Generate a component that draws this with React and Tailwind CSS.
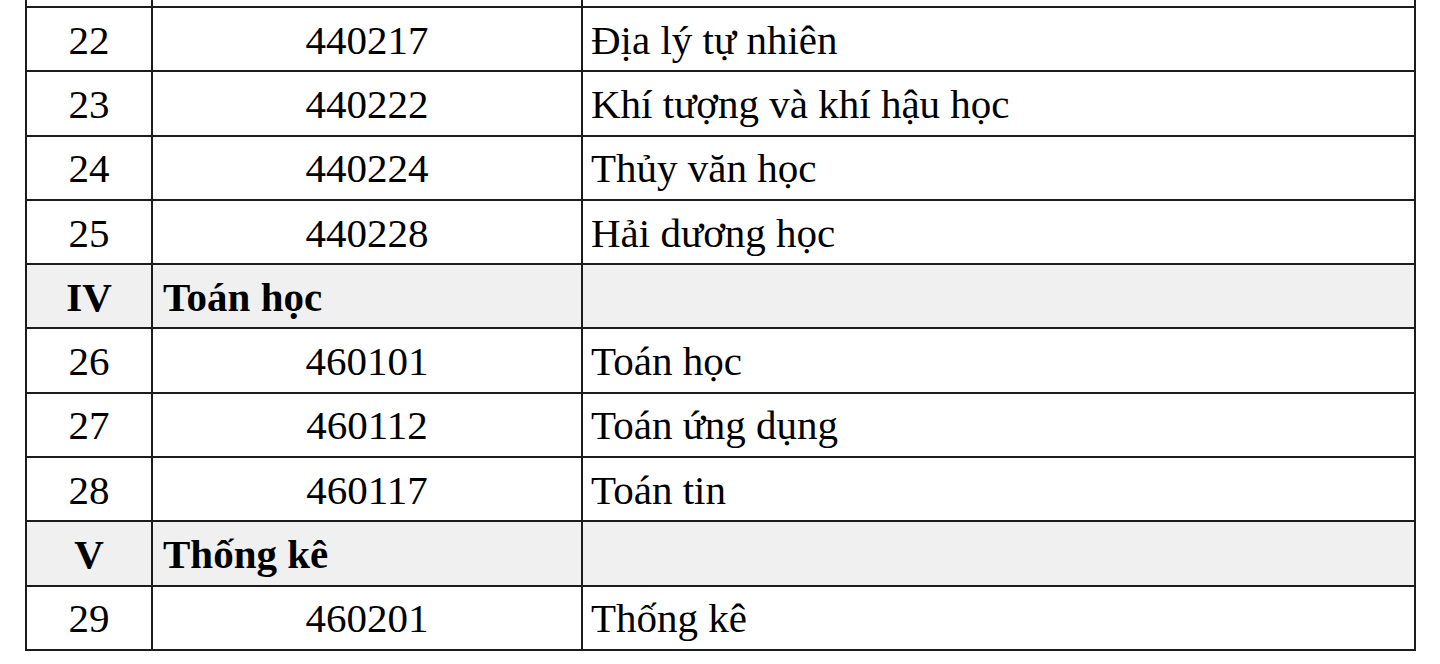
import React from 'react';

const rows = [
  { no: '22', code: '440217', name: 'Địa lý tự nhiên' },
  { no: '23', code: '440222', name: 'Khí tượng và khí hậu học' },
  { no: '24', code: '440224', name: 'Thủy văn học' },
  { no: '25', code: '440228', name: 'Hải dương học' },
  { group: 'IV', title: 'Toán học' },
  { no: '26', code: '460101', name: 'Toán học' },
  { no: '27', code: '460112', name: 'Toán ứng dụng' },
  { no: '28', code: '460117', name: 'Toán tin' },
  { group: 'V', title: 'Thống kê' },
  { no: '29', code: '460201', name: 'Thống kê' },
];

const cols = 'grid grid-cols-[126px_430px_831px]';

const Row = ({ row, last }) => {
  const gray = !!row.group;
  return (
    <div
      className={`${cols} border-t-2 border-[#1c1c1c] ${last ? 'h-[66.3px] border-b-2' : 'h-[64.3px]'} ${gray ? 'bg-[#f0f0f0]' : 'bg-white'}`}
    >
      <div className="flex items-center justify-center border-r-2 border-[#1c1c1c] pt-[2px]">
        <span className={gray ? 'font-bold' : ''}>{gray ? row.group : row.no}</span>
      </div>
      {gray ? (
        <div className="flex items-center border-r-2 border-[#1c1c1c] pl-[10px] pt-[2px] font-bold">
          {row.title}
        </div>
      ) : (
        <div className="flex items-center justify-center border-r-2 border-[#1c1c1c] pt-[2px]">
          {row.code}
        </div>
      )}
      <div className="flex items-center pl-[8px] pt-[2px]">{gray ? '' : row.name}</div>
    </div>
  );
};

export default function App() {
  return (
    <div className="w-[1440px] h-[664px] overflow-hidden bg-white font-['Liberation_Serif','Times_New_Roman',serif] text-[41px] leading-none text-black">
      <div className="ml-[25px] w-[1391px] border-l-2 border-r-2 border-[#1c1c1c]">
        <div className={`${cols} h-[6px]`}>
          <div className="border-r-2 border-[#1c1c1c]" />
          <div className="border-r-2 border-[#1c1c1c]" />
          <div />
        </div>
        {rows.map((r, i) => (
          <Row key={i} row={r} last={i === rows.length - 1} />
        ))}
      </div>
    </div>
  );
}
